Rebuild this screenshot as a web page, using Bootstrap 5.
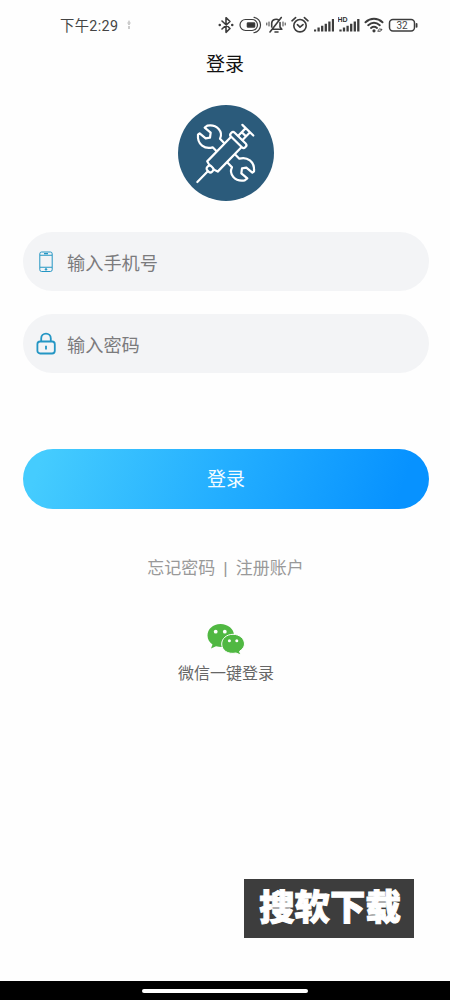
<!DOCTYPE html>
<html lang="zh-CN">
<head>
<meta charset="utf-8">
<meta name="viewport" content="width=device-width, initial-scale=1">
<title>登录</title>
<link rel="stylesheet" href="https://cdn.jsdelivr.net/npm/bootstrap@5.3.0/dist/css/bootstrap.min.css">
<style>
body{font-family:"Liberation Sans","Noto Sans CJK SC",sans-serif;background:#fefefe;color:#111}
.screen{height:1000px;width:450px;overflow:hidden}
.status{height:50px;padding:0 32px 0 60px}
.clock{font:14.3px/20px Roboto,"Noto Sans CJK SC",sans-serif;color:#444;letter-spacing:.35px;padding-top:1px}
.icons svg{display:block;fill:none;stroke:#3c3c3c;stroke-width:1.6;stroke-linecap:round;stroke-linejoin:round}
.icons .bars{stroke-linecap:butt}
.title{font-size:19px;line-height:28px;height:55px;font-weight:400;margin:0;padding-top:1px}
.field{height:59px;border-radius:30px;background:#f3f4f6;padding-left:13px;margin-bottom:23px}
.field svg{width:20px;height:24px;flex:none;fill:none;stroke:#2496c4}
.field input{font-size:18.2px;color:#777;margin-left:11px;padding:5px 0 0;height:40px}
.field input::placeholder{color:#7b7b7d;opacity:1}
.login{height:60px;border-radius:30px;border:0;margin-top:52.5px;font-size:19px;color:#f4fcff;background:linear-gradient(110deg,#45ccfe 5%,#23aeff 50%,#0792ff 92%)}
.login span{display:block;padding-top:4px}
.links{font-size:17px;line-height:26px;margin-top:47px;padding-left:1px;color:#999}
.wechat{margin-top:41px;padding-left:2px;font-size:16px;line-height:24px;color:#666}
.stamp{width:170px;height:59px;margin:193px 36px 0 auto;background:#3d3d3d;color:#fff;font:900 35.4px/51px "Noto Sans CJK SC",sans-serif;-webkit-text-stroke:1px #fff;padding-left:2px}
.homebar{height:19px;background:#000}
.homebar span{width:166px;height:4px;border-radius:3px;background:#fff}
</style>
</head>
<body>
<div class="screen d-flex flex-column">
  <header class="status d-flex align-items-center justify-content-between flex-shrink-0">
    <div class="d-flex align-items-center"><span class="clock">下午2:29</span>
      <svg class="ms-2" width="6" height="10" viewBox="0 0 6 10" fill="#ccc"><path d="M3 0 5 3.5H4V5H2V3.5H1ZM2 6h2v3H2Z"/></svg></div>
    <div class="icons d-flex align-items-center">
      <svg width="16" height="18" viewBox="0 0 16 18"><path d="m4 5 8 7.5-4 3.8V1.7l4 3.8L4 13"/><path d="M1.7 9h.1M14.2 9h.1" stroke-width="2.4"/></svg>
      <svg style="margin-left:5px" width="23" height="18" viewBox="0 0 23 18"><path d="M13 3.5H6.5a5.5 5.5 0 0 0 0 11H13M13 3.5a5.5 5.5 0 0 1 0 11M15 1.3a7.8 7.8 0 0 1 0 15.4" stroke-width="1.2"/><rect x="8.5" y="7" width="7" height="4" rx=".5" fill="#333"/></svg>
      <svg style="margin-left:4px" width="20" height="18" viewBox="0 0 20 18"><path d="M12.7 4.2C11 2.5 6 3 5.7 7v4M14 6.5V11l1.8 2.3H6.5M15.3 1.5 4 16M9 16h3"/><path d="M3 6v4M.8 7v2M17 6v4M19.2 7v2" stroke-width="1"/></svg>
      <svg style="margin-left:5px" width="18" height="18" viewBox="0 0 18 18"><circle cx="9" cy="9.7" r="6.2"/><path d="M1 4.8 4.6 1.6M17 4.8l-3.6-3.2M6.4 8.7 9 11.2l3-2.6"/></svg>
      <svg class="bars" style="margin-left:5px" width="20" height="18" viewBox="0 0 20 18"><path d="M1 15.5v-2M4.6 15.5v-4M8.2 15.5V9.8M11.8 15.5V7.8M15.4 15.5v-10M19 15.5V3" stroke-width="2.3"/></svg>
      <svg class="bars" style="margin-left:4px" width="22" height="18" viewBox="0 0 22 18"><path d="M2.5 15.5v-2M6 15.5v-4M9.6 15.5V9.8M13.2 15.5V7.8M16.8 15.5v-10M20.3 15.5V3" stroke-width="2.3"/><text x="-.5" y="6.4" font-family="Liberation Sans" font-weight="700" font-size="7" fill="#333" stroke="none">HD</text></svg>
      <svg style="margin-left:4px" width="20" height="18" viewBox="0 0 20 18"><path d="M1.5 6.3c5-4.6 12-4.6 17 0M4.2 9.2c3.6-3.1 8-3.1 11.6 0M7 12c2-1.6 4-1.6 6 0" stroke-width="2"/><circle cx="10" cy="14.8" r=".8" fill="#333"/><path d="m14 14.5 1.5-1.5 2.5.4-1.5 1.8H14" stroke-width="1"/></svg>
      <svg style="margin-left:4px" width="30" height="18" viewBox="0 0 30 18"><rect x="1.5" y="3.5" width="25" height="11.5" rx="3.4" stroke-width="1.5"/><path d="M28.6 8v2.8" stroke-width="1.8"/><text x="14" y="13" text-anchor="middle" font-family="Roboto" font-size="10" fill="#444" stroke="none">32</text></svg>
    </div>
  </header>
  <main class="d-flex flex-column flex-grow-1">
    <h1 class="title text-center">登录</h1>
    <svg class="align-self-center" width="97" height="97" viewBox="21 21 291 291" fill="none" stroke="#fff" stroke-width="6.6" stroke-linejoin="round" stroke-linecap="round">
      <circle cx="168" cy="165" r="144" fill="#2b5b7b" stroke="none"/>
      <path d="m166 139-16-17c10-20-8-44-38-39l-8 6 18 15-2 15-13 2-18-15-5 4c-3 30 21 45 44 38l20 20"/>
      <path d="m170 191 16 17c-10 20 8 44 38 39l8-6-18-15 2-15 13-2 18 15 5-4c3-30-21-45-44-38l-20-20"/>
      <g transform="translate(82 252) rotate(-45.7)" fill="#2b5b7b"><path d="M0 0H45"/><path d="M65-22H172V22H65Q57 0 65-22Z"/><rect x="46" y="-10" width="17" height="20" rx="7"/><rect x="168" y="-30" width="16" height="60" rx="7"/><path d="M185-9h31M185 9h31M217-23v46M200-9V9"/></g>
    </svg>
    <form class="d-flex flex-column" style="padding:30px 21px 0 23px">
      <div class="field d-flex align-items-center">
        <svg viewBox="0 0 20 24"><rect x="3.8" y="2" width="12.4" height="19.5" rx="1.8"/><path d="M4 5.2h12M4 17.3h12M8 3.6h4" stroke-width="1.1"/><circle cx="10" cy="19.4" r=".8" fill="#2496c4"/></svg>
        <input type="text" class="form-control border-0 bg-transparent shadow-none" placeholder="输入手机号">
      </div>
      <div class="field d-flex align-items-center">
        <svg viewBox="0 0 20 24" stroke-width="1.8"><rect x="1.4" y="9.5" width="17.4" height="12" rx="2.7"/><path d="M5.2 9.3V6.4a4.8 4.8 0 0 1 9.6 0v2.9M10 13.8v3.6"/></svg>
        <input type="text" class="form-control border-0 bg-transparent shadow-none" placeholder="输入密码">
      </div>
      <button type="button" class="btn login w-100 p-0"><span>登录</span></button>
    </form>
    <div class="links d-flex justify-content-center"><span>忘记密码</span><span class="px-2">|</span><span>注册账户</span></div>
    <div class="wechat d-flex flex-column align-items-center">
      <svg width="40" height="32" viewBox="0 0 40 32"><path d="M14.5 1C6.8 1 1.5 6.2 1.5 12.5c0 4 2 7 5 9L5 25.5l5-2.3c12 3 18-4 18-11C28 6 22 1 14.5 1Z" fill="#50b842"/><path d="M27 11.3c-6.5 0-11.3 4.3-11.3 9.7 0 6.2 6 10.7 14.3 9l4.8 2-1.3-3.7c3-2 5-4.5 5-7.3 0-5.4-5-9.7-11.5-9.7Z" fill="#50b842" stroke="#fff"/><g fill="#fff"><circle cx="9.7" cy="8.7" r="1.9"/><circle cx="18.8" cy="8.7" r="1.9"/><circle cx="23.4" cy="17.8" r="1.5"/><circle cx="30.8" cy="17.8" r="1.5"/></g></svg>
      <span style="margin-top:7px">微信一键登录</span>
    </div>
    <div class="stamp text-center">搜软下载</div>
  </main>
  <footer class="homebar d-flex align-items-center justify-content-center flex-shrink-0"><span></span></footer>
</div>
<script src="https://cdn.jsdelivr.net/npm/bootstrap@5.3.0/dist/js/bootstrap.bundle.min.js"></script>
</body>
</html>
